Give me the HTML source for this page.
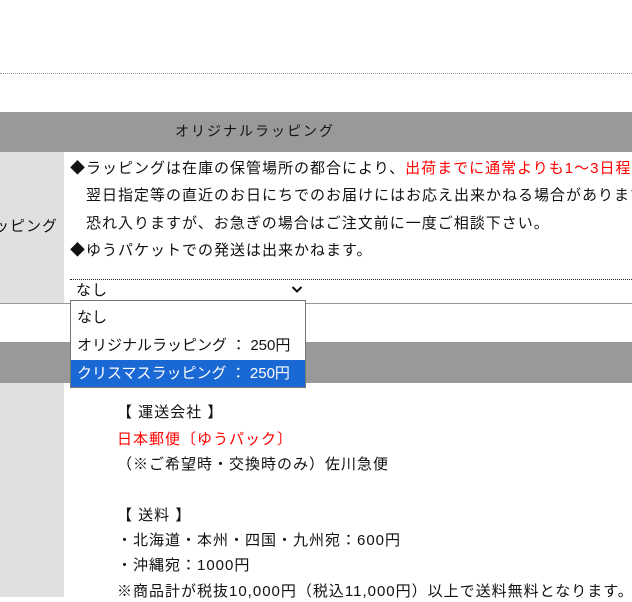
<!DOCTYPE html>
<html><head><meta charset="utf-8"><style>
body{margin:0;width:632px;height:597px;overflow:hidden;background:#fff;position:relative;font-family:"Liberation Sans","Noto Sans CJK JP",sans-serif;font-size:15px;color:#111;letter-spacing:1px}
.a{position:absolute;white-space:nowrap}
.t{position:absolute;white-space:nowrap;line-height:20px}
.r{color:#f00}
</style></head><body>
<div class="a" style="left:0;top:73px;width:632px;border-top:1px dotted #999"></div>
<div class="a" style="left:0;top:112px;width:632px;height:40px;background:#999"></div>
<div class="t" style="left:175px;top:121px;font-size:14px;letter-spacing:2px">オリジナルラッピング</div>
<div class="a" style="left:0;top:152px;width:64px;height:152px;background:#e0e0e0"></div>
<div class="a" style="left:0;top:303px;width:632px;border-top:1px solid #999"></div>
<div class="t" style="left:-22px;top:217px;">ラッピング</div>
<div class="t" style="left:70px;top:159px">◆ラッピングは在庫の保管場所の都合により、<span class="r">出荷までに通常よりも1～3日程度</span></div>
<div class="t" style="left:86px;top:186px">翌日指定等の直近のお日にちでのお届けにはお応え出来かねる場合があります。</div>
<div class="t" style="left:86px;top:214px">恐れ入りますが、お急ぎの場合はご注文前に一度ご相談下さい。</div>
<div class="t" style="left:70px;top:241px">◆ゆうパケットでの発送は出来かねます。</div>
<div class="a" style="left:70px;top:279px;width:562px;border-top:1px dotted #222"></div>
<div class="t" style="left:76px;top:281px">なし</div>
<svg class="a" style="left:291px;top:285px" width="12" height="9" viewBox="0 0 12 9"><path d="M1.5 2 L6 6.5 L10.5 2" fill="none" stroke="#111" stroke-width="2"/></svg>
<div class="a" style="left:0;top:342px;width:632px;height:41px;background:#999"></div>
<div class="a" style="left:0;top:383px;width:64px;height:214px;background:#e0e0e0"></div>
<div class="a" style="left:70px;top:300px;width:234px;height:86px;border:1px solid #777;background:#fff"></div>
<div class="t" style="left:77px;top:308px;letter-spacing:0">なし</div>
<div class="t" style="left:77px;top:336px;letter-spacing:0">オリジナルラッピング ： 250円</div>
<div class="a" style="left:71px;top:360px;width:234px;height:27px;background:#1a68d4"></div>
<div class="t" style="left:77px;top:364px;letter-spacing:0;color:#fff">クリスマスラッピング ： 250円</div>
<div class="t" style="left:117px;top:403px">【 運送会社 】</div>
<div class="t r" style="left:117px;top:430px">日本郵便〔ゆうパック〕</div>
<div class="t" style="left:117px;top:455px">（※ご希望時・交換時のみ）佐川急便</div>
<div class="t" style="left:117px;top:506px">【 送料 】</div>
<div class="t" style="left:117px;top:531px">・北海道・本州・四国・九州宛：600円</div>
<div class="t" style="left:117px;top:556px">・沖縄宛：1000円</div>
<div class="t" style="left:117px;top:582px">※商品計が税抜10,000円（税込11,000円）以上で送料無料となります。</div>
</body></html>
